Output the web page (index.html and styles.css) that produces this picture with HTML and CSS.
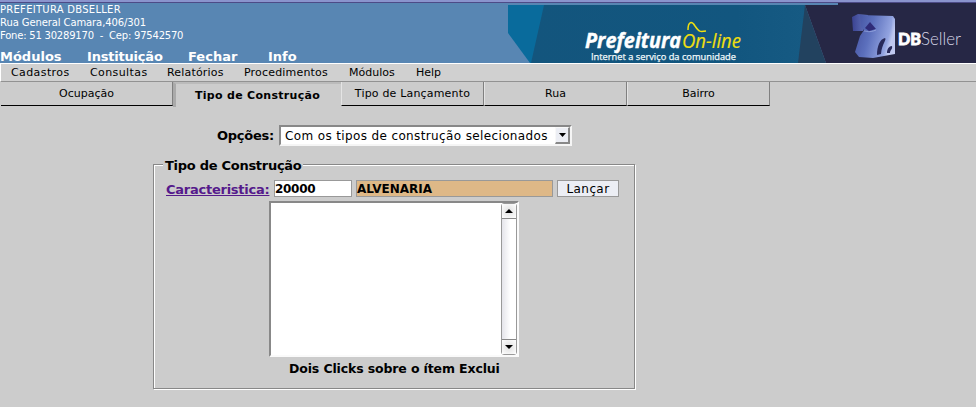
FILE: index.html
```html
<!DOCTYPE html>
<html lang="pt-BR">
<head>
<meta charset="utf-8">
<title>Prefeitura On-line</title>
<link rel="stylesheet" href="styles.css">
</head>
<body>
<header class="header">
  <div class="identity">
    <div class="address"><div class="company">PREFEITURA DBSELLER</div><div class="street">Rua General Camara,406/301</div><div class="phone">Fone: 51 30289170 &nbsp;-&nbsp; Cep: 97542570</div></div>
    <nav class="mainnav"><a>Módulos</a><a class="tight">Instituição</a><a>Fechar</a><a>Info</a></nav>
  </div>
  <svg class="banner" width="468" height="63" viewBox="508 0 468 63">
    <defs>
      <linearGradient id="teal"><stop offset="0" stop-color="#13557d"/><stop offset=".75" stop-color="#12567f"/><stop offset="1" stop-color="#165a83"/></linearGradient>
      <linearGradient id="cube" x2="1" y2=".3"><stop offset="0" stop-color="#414e9c"/><stop offset=".45" stop-color="#5c70bd"/><stop offset=".9" stop-color="#93a4e0"/><stop offset="1" stop-color="#c0c9f0"/></linearGradient>
      <linearGradient id="face" x2="1"><stop offset="0" stop-color="#3a4290"/><stop offset="1" stop-color="#6677c0"/></linearGradient>
    </defs>
    <path fill="#096b9c" d="M508 5H545V63H530L508 33Z"/>
    <path fill="url(#teal)" d="M544 5H805V63H531Z"/>
    <path fill="#22425f" d="M805 5L826 63H798Z"/>
    <path fill="#262745" d="M805 5H838V3H976V63H826Z"/>
    <text class="brand" x="585" y="48" textLength="96" lengthAdjust="spacingAndGlyphs">Prefeitura</text>
    <text class="online" x="682" y="48" textLength="59" lengthAdjust="spacingAndGlyphs">On-line</text>
    <path fill="none" stroke="#efdf10" stroke-width="1.5" d="M688 30C688 21 692 21 695 26C699 32 700 32 706 31"/>
    <text class="slogan" x="591" y="59.5" textLength="145" lengthAdjust="spacingAndGlyphs">Internet a serviço da comunidade</text>
    <path fill="url(#face)" d="M852 17L858 14L868 15L863 31L853 31Z"/>
    <path fill="url(#cube)" d="M860 15L893 16L895 19V54L873 58L859 57L855 52L860 36L864 30L861 27Z"/>
    <path fill="#2f2b78" d="M870 22L876 29L869 31L865 28Z"/>
    <path fill="#27295a" d="M877 55C877 46 880 39 885 38C887 40 882 43 881 54ZM887 53C887 49 889 46 892 46C893 49 890 50 890 53Z"/>
    <path fill="none" stroke="#b9c6f2" stroke-width="1" opacity=".5" d="M864 31C867 31 869 33 876 30M893 18V51"/>
    <text class="db" x="898" y="45" textLength="23" lengthAdjust="spacingAndGlyphs">DB</text>
    <text class="seller" x="921" y="45" textLength="40" lengthAdjust="spacingAndGlyphs">Seller</text>
  </svg>
</header>
<nav class="submenu"><a class="wide">Cadastros</a><a class="wide">Consultas</a><a class="mid">Relatórios</a><a class="mid">Procedimentos</a><a>Módulos</a><a>Help</a></nav>
<div class="tabs">
  <div class="tab">Ocupação</div><div class="tab active">Tipo de Construção</div><div class="tab mid">Tipo de Lançamento</div><div class="tab">Rua</div><div class="tab">Bairro</div>
</div>
<main class="form">
  <div class="options"><span class="optlabel">Opções:</span><div class="select"><span>Com os tipos de construção selecionados</span><i class="drop"><svg width="7" height="4"><path d="M0 0H7L3.5 4Z"/></svg></i></div></div>
  <fieldset class="group">
    <legend><span>Tipo de Construção</span></legend>
    <div class="row"><a class="link" href="#">Caracteristica:</a><div class="field code">20000</div><div class="field name">ALVENARIA</div><div class="button">Lançar</div></div>
    <div class="list">
      <div class="scroll"><i><svg width="8" height="4"><path d="M0 4H8L4 0Z"/></svg></i><i><svg width="8" height="4"><path d="M0 0H8L4 4Z"/></svg></i></div>
    </div>
    <div class="hint"><span>Dois Clicks sobre o ítem Exclui</span></div>
  </fieldset>
</main>
</body>
</html>
```
FILE: styles.css
```css
* { box-sizing: border-box; }
body { margin: 0; height: 407px; overflow: hidden; background: #ccc; color: #000; font: 11px/13px "DejaVu Sans", sans-serif; }
.header { height: 63px; display: flex; background: linear-gradient(#8a94cd 0 2px, #4d4b87 2px 3px, #5886b3 3px); color: #fff; }
.identity { width: 508px; flex: none; padding-top: 3px; }
.address { font-size: 10px; height: 46px; white-space: nowrap; }
.company { letter-spacing: .27px; }
.street { letter-spacing: -.1px; }
.phone { letter-spacing: -.21px; }
.banner { display: block; flex: none; }
.mainnav { display: grid; grid-template-columns: 87px 101px 80px 60px; font-weight: bold; font-size: 13px; line-height: 15px; }
.tight { letter-spacing: -.2px; }
.wide { letter-spacing: .4px; }
.mid { letter-spacing: .18px; }
.brand { font: italic bold 20.5px "Open Sans", sans-serif; fill: #fff; stroke: #fff; stroke-width: .4; }
.online { font: italic 20.5px "Open Sans", sans-serif; fill: #efdf10; stroke: #efdf10; stroke-width: .2; }
.slogan { font: 9.5px "Open Sans", sans-serif; fill: #f2fafc; stroke: #f2fafc; stroke-width: .25; }
.db { font: 900 17px Lato, sans-serif; fill: #fff; stroke: #fff; stroke-width: .8; }
.seller { font: 300 18px Lato, sans-serif; fill: #d5d5e5; }
.submenu { height: 19px; display: grid; grid-template-columns: 79px 77px 77px 105px 67px 60px; padding: 2px 0 0 10px; background: #d0d0d0; border: 1px solid #fff; border-right: 0; border-bottom-color: #929292; }
.tabs { display: flex; height: 25px; padding-left: 1px; }
.tab { width: 143px; height: 24px; padding-top: 5px; text-align: center; border-right: 1px solid #808080; border-bottom: 1px solid #000; border-left: 1px solid #e4e4e4; }
.tab:first-child { width: 172px; border-left: 0; }
.tab.active { width: 168px; height: 25px; padding: 5px 2px 0 0; font-weight: bold; letter-spacing: .3px; border: 0 solid #bbb; border-left: 3px solid #aaa; border-top-width: 2px; }
.options { display: flex; align-items: center; height: 21px; margin: 18px 0 0 217px; }
.optlabel { width: 62px; font-weight: bold; font-size: 13px; letter-spacing: -.25px; }
.select { width: 293px; height: 21px; display: flex; justify-content: space-between; background: #fff; border: 2px solid #888; border-right-color: #f5f5f5; border-bottom-color: #f5f5f5; padding: 0 0 0 4px; font-size: 12px; line-height: 18px; letter-spacing: .37px; white-space: nowrap; }
.drop { width: 15px; height: 17px; display: flex; align-items: center; justify-content: center; background: #eceef4; border: 1px solid #f8f8f8; border-right: 2px solid #888; border-bottom: 2px solid #888; }
.group { width: 482px; height: 231px; margin: 12px 0 0 153px; padding: 0 0 0 1px; border: 1px solid #888; box-shadow: 1px 1px #fff, inset 1px 1px #fff; }
.group legend { margin-left: 8px; padding: 0 2px; font-weight: bold; font-size: 13px; letter-spacing: -.28px; line-height: 15px; height: 13px; background: #ccc; white-space: nowrap; }
.row { display: flex; height: 17px; margin: 9px 0 0 11px; font-size: 12px; line-height: 17px; }
.link { width: 108px; color: #551a8b; font-weight: bold; font-size: 13px; letter-spacing: -.25px; line-height: 19px; }
.field { height: 17px; border: 1px solid #999; font-weight: bold; background: #fff; line-height: 17px; }
.code { width: 78px; margin-right: 4px; letter-spacing: -.3px; }
.name { width: 197px; margin-right: 4px; background: #deb887; }
.button { width: 62px; height: 17px; border: 1px solid #999; background: #eceef4; text-align: center; letter-spacing: .4px; }
.list { display: flex; justify-content: flex-end; width: 250px; height: 156px; margin: 4px 0 0 114px; background: #fff; border: 2px solid #888; border-right-color: #fafafa; border-bottom-color: #fafafa; }
.scroll { width: 16px; height: 152px; display: flex; flex-direction: column; justify-content: space-between; border: 1px solid #999; border-radius: 3px; background: linear-gradient(90deg, #e4e4ea, #fff 60%); }
.scroll i { height: 15px; display: flex; align-items: center; justify-content: center; background: radial-gradient(#e0e0e0, #fff); border-bottom: 1px solid #888; }
.scroll i:last-child { border: 0; border-top: 1px solid #888; }
.hint { margin: 4px 0 0 134px; font-weight: bold; font-size: 12.5px; letter-spacing: -.13px; line-height: 15px; white-space: nowrap; }
```
